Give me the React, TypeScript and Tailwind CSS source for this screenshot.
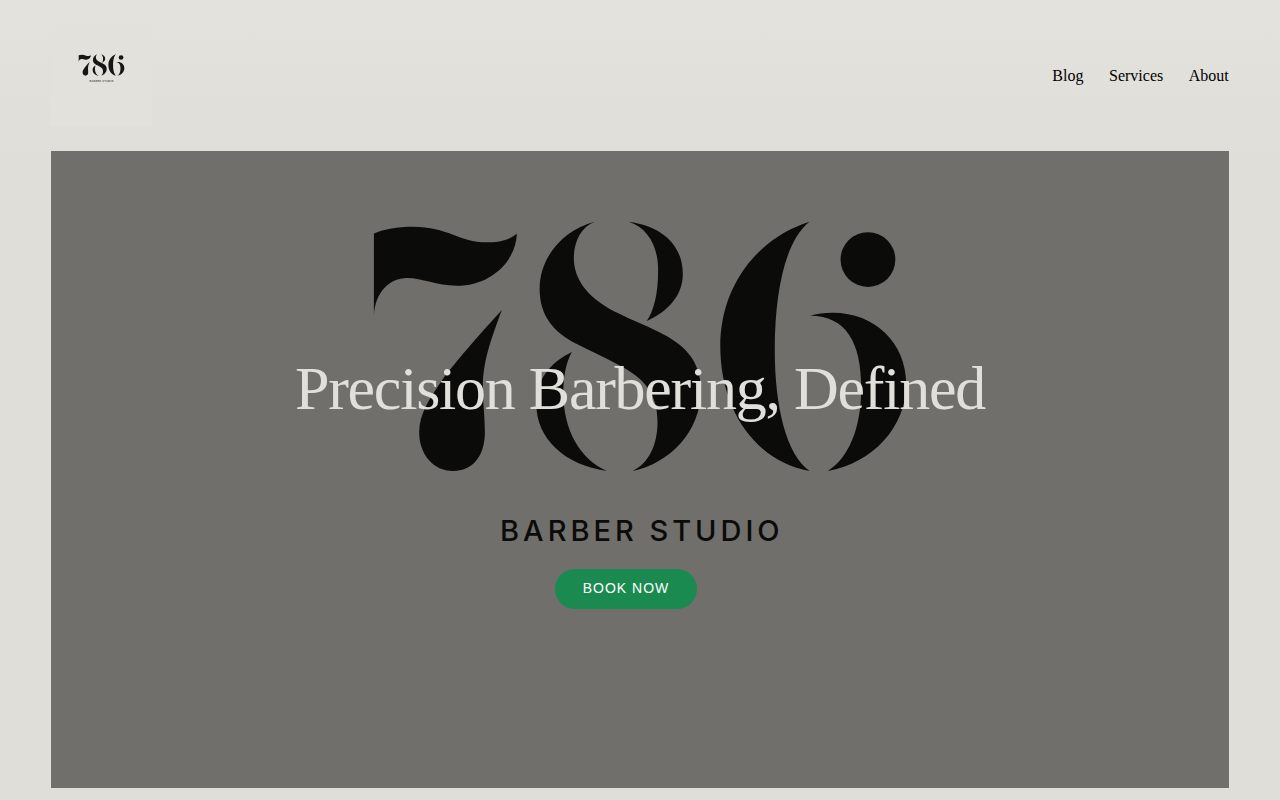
const links = ["Blog", "Services", "About"];

function BrandArt({ className, slice = false }: { className: string; slice?: boolean }) {
  return (
    <svg
      className={className}
      viewBox="51 -119.5 1178 1178"
      preserveAspectRatio={slice ? "xMidYMid slice" : "xMidYMid meet"}
      fill="currentColor"
      aria-hidden="true"
    >
      <path d="M374 233.5C384 229 398 226.7 413 226.7C448 226.7 459 242.3 487 242.3C500 242.3 511 239.5 517 233.5C516 262 490 285.7 457 285.7C436 285.7 423 278 407 278C390 278 375 292 374 316Z" />
      <path d="M502 310C470 345 452 367 443 379C430 398 419.3 414 419.3 432C419.3 455 434 471 453 471C473 471 485 456 485 432C485 415 483 405 483 387C483 363 490 342 502 310Z" />
      <path d="M595 221.7C563 230 539.8 257 539.8 289C539.8 315 553 332 577 344C590 351 605 357 617 364C645 378 657.7 394 657.7 422C657.7 445 649 463 633 471C670 463 701 432 701 390C701 360 684 344 658 331.5C645 325 632 320 619 313.5C590 300 574 281 574 258C574 242 581 227 595 221.7Z" />
      <path d="M629 221.7C661 226 683 244 683 274C683 295 669 311 647 321C654 310 658.3 295 658.3 270C658.3 246 648 228 629 221.7Z" />
      <path d="M572 352C549 363 536.5 381 536.5 404C536.5 439 565 465 607 471C580 459 563.5 430 563.5 393C563.5 377 566 363 572 352Z" />
      <path d="M809.8 221.7C757.5 238 720.5 286 720.5 346C720.5 412 757.5 462 809.8 471C787 455 775 408 775 350C775 290 786 240 809.8 221.7Z" />
      <circle cx="868.2" cy="259.5" r="27.4" />
      <path d="M810.5 315.8C817 313.5 824 312.7 833 312.7C875 312.7 906.5 343 906.5 384C906.5 427 873 463 828 471C849 458 861.5 428 861.5 388C861.5 342 846 316 810.5 315.8Z" />
      <text x="642" y="541" textAnchor="middle" className="font-['Inter',sans-serif] text-[29px] font-medium tracking-[4px]">
        BARBER STUDIO
      </text>
    </svg>
  );
}

export default function App() {
  return (
    <div className="min-h-screen bg-linear-to-b from-[#e3e2dd] to-[#dfded9] to-20% px-[4vw] pb-3 font-['Liberation_Serif',serif] text-black">
      <header className="flex items-center justify-between py-[25px]">
        <a href="#home" aria-label="786 Barber Studio" className="bg-[#e2e1dc] text-[#161614]">
          <BrandArt className="block size-[101px]" />
        </a>
        <nav className="flex gap-[2vw] text-base">
          {links.map((label) => (
            <a key={label} href={`#${label.toLowerCase()}`}>
              {label}
            </a>
          ))}
        </nav>
      </header>
      <main className="relative flex min-h-[calc(100vh-163px)] flex-col items-center overflow-hidden bg-[#706f6b] px-6 pt-[201px] pb-16">
        <BrandArt slice className="absolute inset-0 size-full text-[#0b0b0a]" />
        <h1 className="relative text-center text-[62px] leading-[73px] tracking-[-0.02em] text-[#e0dfda]">
          Precision Barbering, Defined
        </h1>
        <button
          type="button"
          className="relative mt-36 mr-7 h-10 cursor-pointer rounded-full bg-[#1b8a50] px-7 pb-0.5 font-['Liberation_Sans',sans-serif] text-sm tracking-[1px] text-white"
        >
          BOOK NOW
        </button>
      </main>
    </div>
  );
}
